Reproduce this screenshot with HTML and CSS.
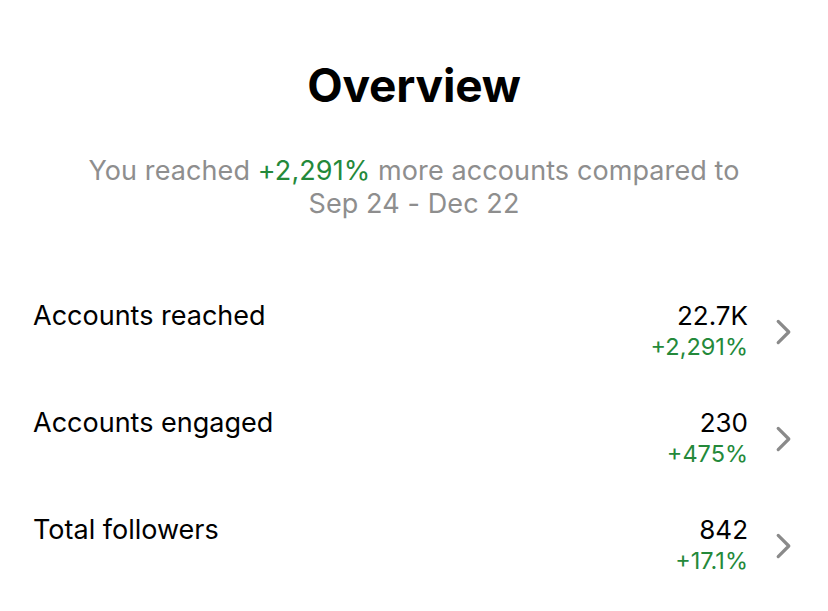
FILE: index.html
```html
<!DOCTYPE html>
<html>
<head>
<meta charset="utf-8">
<link rel="stylesheet" href="styles.css">
</head>
<body>
<main class="page">
  <h1 class="title">Overview</h1>
  <p class="summary">You reached <span class="up">+2,291%</span> more accounts compared to<br>Sep 24 - Dec 22</p>
  <ul class="stats">
    <li class="row">
      <span class="label">Accounts reached</span>
      <span class="values"><span class="value">22.7K</span><span class="delta">+2,291%</span></span>
      <svg class="chev" viewBox="0 0 16 26"><path d="M3 3 L13 13 L3 23" /></svg>
    </li>
    <li class="row">
      <span class="label">Accounts engaged</span>
      <span class="values"><span class="value">230</span><span class="delta">+475%</span></span>
      <svg class="chev" viewBox="0 0 16 26"><path d="M3 3 L13 13 L3 23" /></svg>
    </li>
    <li class="row">
      <span class="label">Total followers</span>
      <span class="values"><span class="value">842</span><span class="delta">+17.1%</span></span>
      <svg class="chev" viewBox="0 0 16 26"><path d="M3 3 L13 13 L3 23" /></svg>
    </li>
  </ul>
</main>
</body>
</html>
```
FILE: styles.css
```css
* { box-sizing: border-box; }
html, body { margin: 0; padding: 0; background: #fff; }
body { font-family: Inter, "Noto Sans", "Liberation Sans", sans-serif; color: #000; }
.page { width: 828px; height: 611px; overflow: hidden; padding-top: 57px; }
.title { margin: 0; text-align: center; font-size: 46px; font-weight: 700; line-height: 56px; letter-spacing: -0.2px; }
.summary { margin: 41px 0 0; text-align: center; font-size: 27px; line-height: 33px; color: #8e8e8e; letter-spacing: 0.1px; }
.up { color: #24893a; }
.stats { list-style: none; margin: 79px 0 0; padding: 0 36px 0 33px; }
.row { display: flex; align-items: flex-start; height: 107px; }
.label { flex: 1; font-size: 27px; line-height: 34px; }
.values { display: flex; flex-direction: column; align-items: flex-end; }
.value { font-size: 26px; line-height: 34px; }
.delta { font-size: 23.5px; line-height: 28px; color: #24893a; }
.chev { width: 17px; height: 28px; margin: 19px 0 0 27px; fill: none; stroke: #8a8a8a; stroke-width: 3; stroke-linecap: round; stroke-linejoin: round; }
```
